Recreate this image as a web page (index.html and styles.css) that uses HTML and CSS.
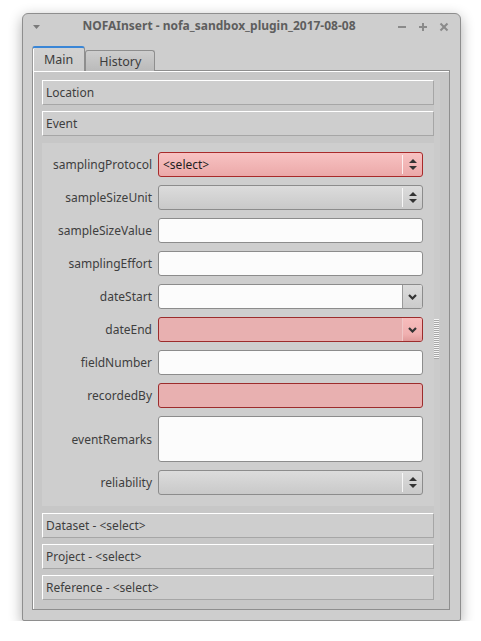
FILE: index.html
```html
<!DOCTYPE html>
<html>
<head>
<meta charset="utf-8">
<link rel="stylesheet" href="styles.css">
</head>
<body>
<div class="window">
  <div class="titlebar">
    <span class="menu-btn"><svg width="7" height="4" viewBox="0 0 7 4"><polygon points="0,0 7,0 3.5,4" fill="#7a7a7a"/></svg></span>
    <span class="title">NOFAInsert - nofa_sandbox_plugin_2017-08-08</span>
    <span class="ctrls">
      <svg width="10" height="10" viewBox="0 0 10 10"><line x1="1" y1="5" x2="9" y2="5" stroke="#8a8a8a" stroke-width="2"/></svg>
      <svg width="10" height="10" viewBox="0 0 10 10"><line x1="1" y1="5" x2="9" y2="5" stroke="#8a8a8a" stroke-width="2"/><line x1="5" y1="1" x2="5" y2="9" stroke="#8a8a8a" stroke-width="2"/></svg>
      <svg width="10" height="10" viewBox="0 0 10 10"><line x1="1.5" y1="1.5" x2="8.5" y2="8.5" stroke="#8a8a8a" stroke-width="2"/><line x1="8.5" y1="1.5" x2="1.5" y2="8.5" stroke="#8a8a8a" stroke-width="2"/></svg>
    </span>
  </div>
  <div class="tabs">
    <div class="tab active">Main</div>
    <div class="tab">History</div>
  </div>
  <div class="pane">
    <div class="content">
      <div class="section">Location</div>
      <div class="section">Event</div>
      <div class="form">
        <label>samplingProtocol</label>
        <div class="combo red"><span class="val">&lt;select&gt;</span><span class="cbtn"><svg width="8" height="11" viewBox="0 0 8 11"><polygon points="4,0 8,4 0,4" fill="#333"/><polygon points="0,7 8,7 4,11" fill="#333"/></svg></span></div>
        <label>sampleSizeUnit</label>
        <div class="combo"><span class="val"></span><span class="cbtn"><svg width="8" height="11" viewBox="0 0 8 11"><polygon points="4,0 8,4 0,4" fill="#333"/><polygon points="0,7 8,7 4,11" fill="#333"/></svg></span></div>
        <label>sampleSizeValue</label>
        <div class="edit"></div>
        <label>samplingEffort</label>
        <div class="edit"></div>
        <label>dateStart</label>
        <div class="date"><span class="val"></span><span class="dbtn"><svg width="9" height="6" viewBox="0 0 9 6"><polyline points="1,1 4.5,4.5 8,1" fill="none" stroke="#333" stroke-width="2.2"/></svg></span></div>
        <label>dateEnd</label>
        <div class="date red"><span class="val"></span><span class="dbtn"><svg width="9" height="6" viewBox="0 0 9 6"><polyline points="1,1 4.5,4.5 8,1" fill="none" stroke="#333" stroke-width="2.2"/></svg></span></div>
        <label>fieldNumber</label>
        <div class="edit"></div>
        <label>recordedBy</label>
        <div class="edit red"></div>
        <label>eventRemarks</label>
        <div class="edit tall"></div>
        <label>reliability</label>
        <div class="combo"><span class="val"></span><span class="cbtn"><svg width="8" height="11" viewBox="0 0 8 11"><polygon points="4,0 8,4 0,4" fill="#333"/><polygon points="0,7 8,7 4,11" fill="#333"/></svg></span></div>
      </div>
      <div class="section">Dataset - &lt;select&gt;</div>
      <div class="section">Project - &lt;select&gt;</div>
      <div class="section">Reference - &lt;select&gt;</div>
    </div>
    <div class="scrollbar"><div class="grip"></div></div>
  </div>
</div>
</body>
</html>
```

FILE: styles.css
```css
* { box-sizing: border-box; }
html, body { margin: 0; padding: 0; background: #ffffff; }
body {
  font-family: "Noto Sans", "DejaVu Sans", sans-serif;
  font-size: 12px;
  color: #3c3c3c;
}
.window {
  margin: 13px 0 0 22px;
  width: 439px;
  height: 608px;
  background: #cecece;
  border: 1px solid #8e8e8e;
  border-radius: 6px 6px 2px 2px;
  box-shadow: 0 4px 14px rgba(0,0,0,0.32);
  display: flex;
  flex-direction: column;
  padding: 0 10px 10px 9px;
}
.titlebar {
  flex-shrink: 0;
  height: 26px;
  padding-bottom: 3px;
  display: flex;
  align-items: center;
  margin: 0 -10px 0 -9px;
}
.menu-btn {
  width: 22px;
  padding-left: 10px;
  display: flex;
  align-items: center;
  padding-top: 3px;
}
.title {
  flex: 1;
  text-align: center;
  font-weight: bold;
  color: #5e5e5e;
  white-space: nowrap;
}
.ctrls {
  width: 67px;
  display: flex;
  gap: 11px;
  padding-left: 4px;
  padding-top: 3px;
  align-items: center;
}
.ctrls svg { display: block; }
.tabs {
  flex-shrink: 0;
  margin-top: 6px;
  display: flex;
  align-items: flex-end;
  margin-bottom: -1px;
  position: relative;
  z-index: 1;
}
.tab {
  height: 21px;
  padding: 0 13px 0 13px;
  border: 1px solid #8e8e8e;
  border-bottom: none;
  border-radius: 3px 3px 0 0;
  background: linear-gradient(#cdcdcd, #bababa);
  color: #3c3c3c;
  display: flex;
  align-items: center;
  font-size: 12.5px;
}
.tab.active {
  height: 25px;
  padding: 0 11px 1px 11px;
  background: linear-gradient(#d2d2d2, #cccccc);
  border-top: 2px solid #3a86d6;
  border-left: 1px solid #9a9a9a;
  border-right: 1px solid #8e8e8e;
  box-shadow: inset 1px 0 0 #ffffff;
}
.pane {
  flex: 1;
  min-height: 0;
  border: 1px solid #8e8e8e;
  box-shadow: inset 1px 1px 0 #ffffff;
  background: #c7c7c7;
  padding: 9px;
  display: flex;
}
.content {
  flex: 1;
  display: flex;
  flex-direction: column;
  gap: 6px;
}
.section {
  flex-shrink: 0;
  height: 25px;
  background: #cecece;
  border-top: 1px solid #ffffff;
  border-left: 1px solid #ffffff;
  border-right: 1px solid #a6a6a6;
  border-bottom: 1px solid #a6a6a6;
  padding-left: 3px;
  display: flex;
  align-items: center;
  color: #3e3e3e;
}
.form {
  flex-shrink: 0;
  margin: 1px 0;
  background: #cecece;
  display: grid;
  grid-template-columns: 110px 265px;
  grid-template-rows: repeat(8, 25px) 46px 25px;
  column-gap: 6px;
  row-gap: 8px;
  padding: 9px 0 11px 0;
  align-items: center;
}
.form label {
  text-align: right;
  color: #3e3e3e;
  white-space: nowrap;
}
.edit {
  height: 25px;
  background: #fcfcfc;
  border: 1px solid #8c8c8c;
  border-radius: 3px;
}
.edit.red {
  background: #e8b0b0;
  border-color: #9c2c2c;
}
.edit.tall {
  height: 46px;
}
.combo, .date {
  height: 25px;
  border: 1px solid #8c8c8c;
  border-radius: 3px;
  display: flex;
  overflow: hidden;
}
.combo {
  background: linear-gradient(#dcdcdc, #c9c9c9);
}
.combo.red {
  background: linear-gradient(#f8c2c2, #eba9a9);
  border-color: #a82a2a;
}
.combo .val, .date .val {
  flex: 1;
  display: flex;
  align-items: center;
  padding-left: 4px;
  color: #1e1e1e;
}
.cbtn {
  width: 20px;
  display: flex;
  align-items: center;
  justify-content: center;
  border-left: 1px solid rgba(255,255,255,0.8);
  margin: 2px 0;
}
.date { background: #fcfcfc; }
.date .dbtn {
  width: 20px;
  display: flex;
  align-items: center;
  justify-content: center;
  border-left: 1px solid #9a9a9a;
  background: linear-gradient(#dcdcdc, #cbcbcb);
}
.date.red {
  background: #e8b0b0;
  border-color: #9c2c2c;
}
.date.red .dbtn {
  background: linear-gradient(#f8bcbc, #f0b0b0 70%, #e09a9a);
  border-left: 1px solid #f0c8c8;
}
.scrollbar {
  width: 6px;
  background: #cbcbcb;
}
.grip {
  margin-top: 239px;
  height: 40px;
  width: 5px;
  background: repeating-linear-gradient(#f4f4f4 0 1px, #a8a8a8 1px 2px);
}
```
